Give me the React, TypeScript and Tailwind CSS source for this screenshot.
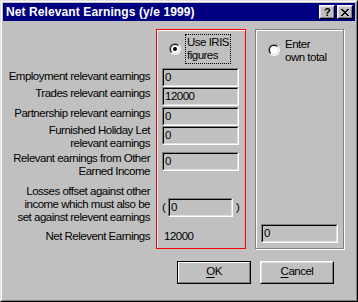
import React from 'react'

const font = "font-['Liberation_Sans',Arial,sans-serif]"

// Win95 style pieces
function Radio({ checked }: { checked?: boolean }) {
  return (
    <div className="w-[12px] h-[12px] rounded-full border border-t-[#808080] border-l-[#808080] border-r-white border-b-white shrink-0">
      <div className="w-full h-full rounded-full border border-t-black border-l-black border-r-[#dfdfdf] border-b-[#dfdfdf] bg-white flex items-center justify-center">
        {checked && <div className="w-[4px] h-[4px] rounded-full bg-black" />}
      </div>
    </div>
  )
}

function Field({ value, className = 'w-[77px]' }: { value: string; className?: string }) {
  return (
    <div className={`${className} h-[19px] border border-t-[#808080] border-l-[#808080] border-r-white border-b-white`}>
      <div className="w-full h-full border border-t-black border-l-black border-r-[#dfdfdf] border-b-[#dfdfdf] bg-[#c0c0c0] pl-px leading-[15px]">
        {value}
      </div>
    </div>
  )
}

function CloseGlyph() {
  const rows = ['11000011', '01100110', '00111100', '00011000', '00111100', '01100110', '11000011']
  return (
    <svg width="8" height="7" viewBox="0 0 8 7" shapeRendering="crispEdges">
      {rows.map((r, y) =>
        r.split('').map((c, x) => (c === '1' ? <rect key={`${x}-${y}`} x={x} y={y} width="1" height="1" fill="#000" /> : null))
      )}
    </svg>
  )
}

function TitleButton({ children }: { children: React.ReactNode }) {
  return (
    <div className="w-[16px] h-[14px] border border-t-white border-l-white border-r-black border-b-black bg-[#c0c0c0]">
      <div className="w-full h-full border border-t-[#dfdfdf] border-l-[#dfdfdf] border-r-[#808080] border-b-[#808080] flex items-center justify-center">
        {children}
      </div>
    </div>
  )
}

function PushButton({ children, isDefault }: { children: React.ReactNode; isDefault?: boolean }) {
  if (isDefault) {
    return (
      <div className="w-[74px] h-[23px] border border-black">
        <div className="w-full h-full border border-t-white border-l-white border-r-[#808080] border-b-[#808080] flex items-center justify-center pb-px">
          {children}
        </div>
      </div>
    )
  }
  return (
    <div className="w-[74px] h-[23px] border border-t-white border-l-white border-r-black border-b-black">
      <div className="w-full h-full border border-t-[#dfdfdf] border-l-[#dfdfdf] border-r-[#808080] border-b-[#808080] flex items-center justify-center pb-px">
        {children}
      </div>
    </div>
  )
}

export default function App() {
  return (
    <div className={`${font} text-[11.5px] tracking-[-0.5px] text-black w-[358px] h-[302px] bg-[#c0c0c0] border border-t-[#dfdfdf] border-l-[#dfdfdf] border-r-black border-b-black`}>
      <div className="h-full border border-t-white border-l-white border-r-[#808080] border-b-[#808080] p-px flex flex-col">
        {/* Title bar */}
        <div className="h-[18px] bg-[#000080] flex items-center pl-[3px] pr-[2px]">
          <span className="text-white font-bold text-[12px] tracking-[0.1px] leading-none">
            Net Relevant Earnings (y/e 1999)
          </span>
          <div className="ml-auto flex gap-[2px]">
            <TitleButton>
              <span className="font-bold text-[11px] leading-none">?</span>
            </TitleButton>
            <TitleButton>
              <CloseGlyph />
            </TitleButton>
          </div>
        </div>

        {/* Body */}
        <div className="flex-1 pt-[8px]">
          <div className="flex">
            {/* Labels */}
            <div className="w-[147px] text-right leading-[13px]">
              <p className="mt-[41px]">Employment relevant earnings</p>
              <p className="mt-[4px]">Trades relevant earnings</p>
              <p className="mt-[7px]">Partnership relevant earnings</p>
              <p className="mt-[4px]">
                Furnished Holiday Let
                <br />
                relevant earnings
              </p>
              <p className="mt-[2px]">
                Relevant earnings from Other
                <br />
                Earned Income
              </p>
              <p className="mt-[7px]">
                Losses offset against other
                <br />
                income which must also be
                <br />
                set against relevent earnings
              </p>
              <p className="mt-[6px]">Net Relevent Earnings</p>
            </div>

            {/* IRIS figures panel */}
            <div className="ml-[6px] w-[90px] h-[220px] border border-[#ff0000] shadow-[inset_1px_1px_0_#fff] flex flex-col">
              <div className="mt-[4px] ml-[12px] flex items-center gap-[4px]">
                <Radio checked />
                <div className="border border-dotted border-black px-px py-px leading-[13px]">
                  Use IRIS
                  <br />
                  figures
                </div>
              </div>
              <div className="ml-[5px] mt-[4px] flex flex-col">
                <Field value="0" />
                <Field value="12000" />
                <div className="mt-px">
                  <Field value="0" />
                </div>
                <Field value="0" />
                <div className="mt-[7px]">
                  <Field value="0" />
                </div>
                <div className="mt-[27px] flex items-center">
                  <span className="w-[6px] leading-[13px]">(</span>
                  <Field value="0" className="w-[65px]" />
                  <span className="ml-[3px] leading-[13px]">)</span>
                </div>
                <p className="mt-[13px] ml-[2px] leading-[13px]">12000</p>
              </div>
            </div>

            {/* Own total panel */}
            <div className="ml-[9px] w-[89px] h-[220px] border border-[#808080] shadow-[inset_1px_1px_0_#fff,1px_1px_0_#fff] flex flex-col">
              <div className="mt-[4px] ml-[12px] flex items-center gap-[3px]">
                <Radio />
                <div className="border border-transparent px-px pt-[3px] pb-0 leading-[13px]">
                  Enter
                  <br />
                  own total
                </div>
              </div>
              <div className="flex-1" />
              <div className="ml-[5px] mb-[5px]">
                <Field value="0" />
              </div>
            </div>
          </div>

          {/* Buttons */}
          <div className="flex mt-[12px] ml-[174px] gap-[9px]">
            <PushButton isDefault>
              <span>
                <span className="underline underline-offset-2">O</span>K
              </span>
            </PushButton>
            <PushButton>
              <span>
                <span className="underline underline-offset-2">C</span>ancel
              </span>
            </PushButton>
          </div>
        </div>
      </div>
    </div>
  )
}
